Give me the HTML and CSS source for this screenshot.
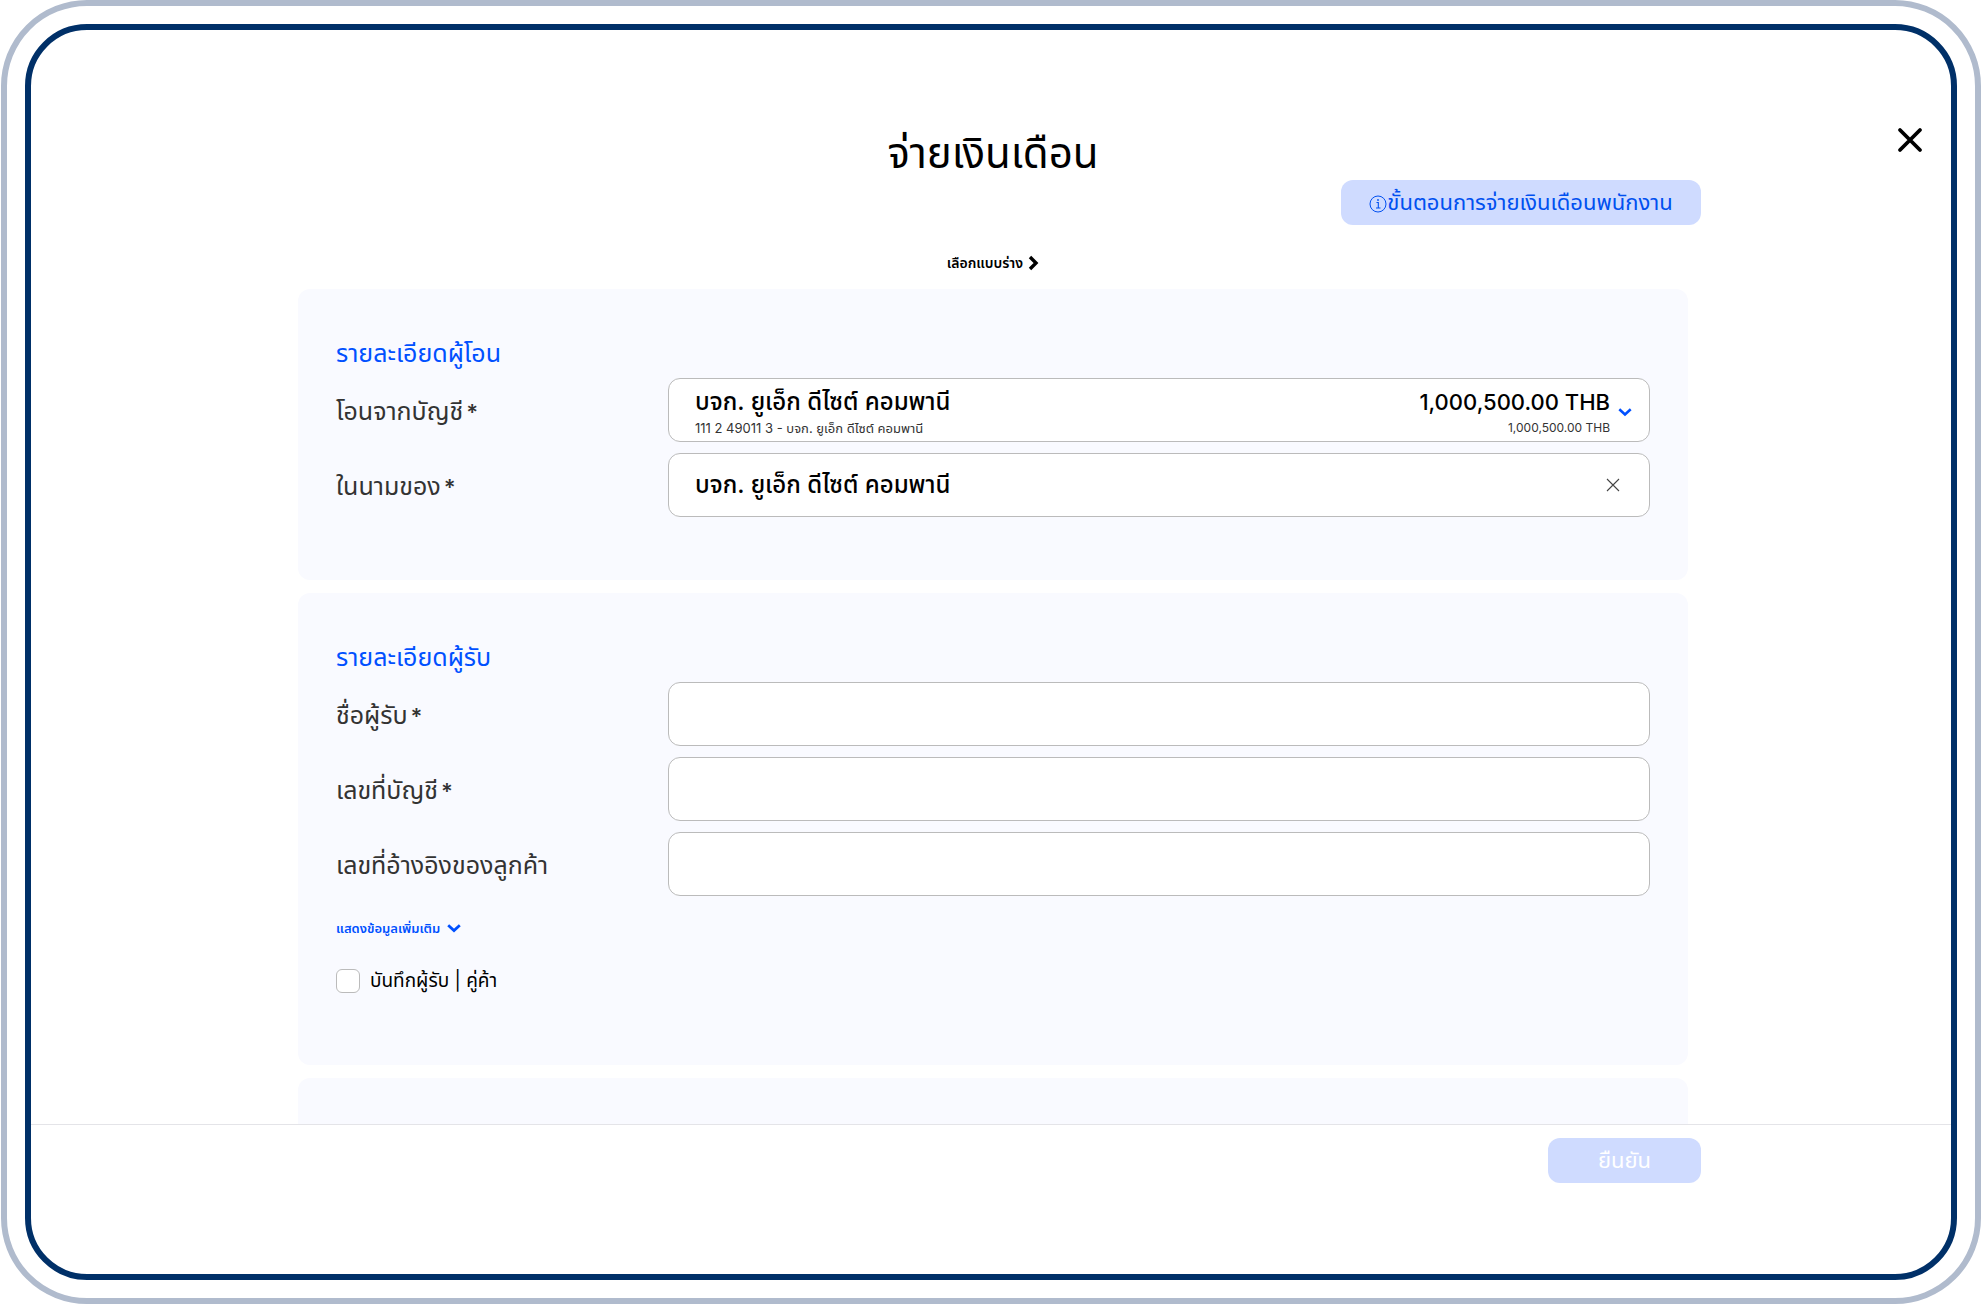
FILE: index.html
```html
<!DOCTYPE html>
<html lang="th">
<head>
<meta charset="utf-8">
<meta name="viewport" content="width=device-width, initial-scale=1">
<title>จ่ายเงินเดือน</title>
<link rel="stylesheet" href="styles.css">
</head>
<body>
<div class="frame">
  <div class="screen">
    <main class="content">
      <button class="close" type="button" aria-label="ปิด">
        <svg width="26" height="26" viewBox="0 0 26 26"><path d="M3 3L23 23M23 3L3 23" fill="none" stroke="#000" stroke-width="3.8" stroke-linecap="round"/></svg>
      </button>
      <header class="header">
        <h1 class="title">จ่ายเงินเดือน</h1>
        <a class="guide" href="#guide">
          <svg width="18" height="18" viewBox="0 0 18 18" fill="none" stroke="#0050f0"><circle cx="9" cy="9" r="8" stroke-width="1"/><path d="M7.5 7.5H9.3V13M7 13H11.5" stroke-width="1.1"/><circle cx="9" cy="5" r=".9" fill="#0050f0" stroke="none"/></svg>ขั้นตอนการจ่ายเงินเดือนพนักงาน
        </a>
        <button class="draft" type="button">เลือกแบบร่าง
          <svg width="11" height="16" viewBox="0 0 11 16"><path d="M2 2L8 8L2 14" fill="none" stroke="#000" stroke-width="3.4"/></svg>
        </button>
      </header>
      <form class="cards" id="payroll">
        <section class="card">
          <h2 class="heading">รายละเอียดผู้โอน</h2>
          <div class="rows">
            <div class="row">
              <label class="label" for="account">โอนจากบัญชี<span class="star">*</span></label>
              <button class="field account" id="account" type="button" aria-haspopup="listbox">
                <span class="lines">
                  <span class="line-main">บจก. ยูเอ็ก ดีไซต์ คอมพานี</span>
                  <span class="line-sub">111 2 49011 3 - บจก. ยูเอ็ก ดีไซต์ คอมพานี</span>
                </span>
                <span class="lines amounts">
                  <span class="line-main">1,000,500.00 THB</span>
                  <span class="line-sub">1,000,500.00 THB</span>
                </span>
                <svg class="chevron" width="14" height="9" viewBox="0 0 14 9"><path d="M1.3 1.3L7 6.4L12.7 1.3" fill="none" stroke="#0050ff" stroke-width="2.6"/></svg>
              </button>
            </div>
            <div class="row">
              <label class="label" for="behalf">ในนามของ<span class="star">*</span></label>
              <div class="field clearable">
                <input class="text" id="behalf" type="text" value="บจก. ยูเอ็ก ดีไซต์ คอมพานี">
                <button class="clear" type="button" aria-label="ล้าง">
                  <svg width="14" height="14" viewBox="0 0 14 14"><path d="M1 1L13 13M13 1L1 13" fill="none" stroke="#444" stroke-width="1.1"/></svg>
                </button>
              </div>
            </div>
          </div>
        </section>
        <section class="card">
          <h2 class="heading">รายละเอียดผู้รับ</h2>
          <div class="rows">
            <div class="row">
              <label class="label" for="payee">ชื่อผู้รับ<span class="star">*</span></label>
              <input class="field text" id="payee" type="text">
            </div>
            <div class="row">
              <label class="label" for="number">เลขที่บัญชี<span class="star">*</span></label>
              <input class="field text" id="number" type="text">
            </div>
            <div class="row">
              <label class="label" for="reference">เลขที่อ้างอิงของลูกค้า</label>
              <input class="field text" id="reference" type="text">
            </div>
          </div>
          <button class="more" type="button">แสดงข้อมูลเพิ่มเติม
            <svg width="14" height="9" viewBox="0 0 14 9"><path d="M1.2 1.3L7 6.6L12.8 1.3" fill="none" stroke="#0050ff" stroke-width="2.8"/></svg>
          </button>
          <label class="save"><input class="check" type="checkbox"><span>บันทึกผู้รับ | คู่ค้า</span></label>
        </section>
        <section class="card"></section>
      </form>
    </main>
    <footer class="footer">
      <div class="actions"><button class="confirm" type="submit" form="payroll" disabled>ยืนยัน</button></div>
    </footer>
  </div>
</div>
</body>
</html>
```
FILE: styles.css
```css
* { box-sizing: border-box; }

body {
  margin: 0;
  background: #fff;
  color: #000;
  font-family: Inter, "Noto Sans Thai", "Noto Sans", sans-serif;
}

button, input {
  margin: 0;
  padding: 0;
  border: 0;
  background: none;
  color: inherit;
  font: inherit;
}

svg { flex: none; display: block; }

.frame {
  height: 100vh;
  margin-left: 1px;
  padding: 18px;
  border: 6px solid #b0bbcd;
  border-radius: 86px;
  display: flex;
}

.screen {
  flex: 1;
  min-width: 0;
  border: 6px solid #003068;
  border-radius: 62px;
  overflow: hidden;
  display: flex;
  flex-direction: column;
}

.content {
  position: relative;
  flex: 1;
  min-height: 0;
  overflow: hidden;
  padding: 96px 0 0 4px;
}

.close {
  position: absolute;
  top: 97px;
  right: 28px;
}

.header, .actions {
  width: 100%;
  max-width: 1416px;
  margin: 0 auto;
}

.header {
  display: flex;
  flex-direction: column;
  align-items: center;
}

.title {
  margin: 0;
  font-size: 42px;
  line-height: 54px;
  font-weight: 400;
}

.guide {
  align-self: flex-end;
  height: 45px;
  width: 360px;
  padding-top: 2px;
  display: flex;
  align-items: center;
  justify-content: center;
  border-radius: 12px;
  background: #cfdbff;
  color: #0050f0;
  font-size: 22px;
  text-decoration: none;
  white-space: nowrap;
}

.draft, .more {
  display: flex;
  align-items: center;
  gap: 5px;
  line-height: 20px;
  font-weight: 600;
}

.draft { margin: 28px 0 16px; font-size: 14px; }

.cards {
  width: 100%;
  max-width: 1390px;
  margin: 0 auto;
  display: flex;
  flex-direction: column;
  gap: 13px;
}

.card {
  min-height: 291px;
  padding: 46px 38px 62px;
  border-radius: 12px;
  background: #f9faff;
}

.heading {
  margin: 0 0 7px;
  color: #0050ff;
  font-size: 25px;
  line-height: 36px;
  font-weight: 400;
}

.rows { display: grid; gap: 11px; }

.row {
  display: grid;
  grid-template-columns: 332px 1fr;
  align-items: center;
}

.label { padding-top: 2px; color: #333; font-size: 25px; line-height: 36px; }
.star { margin-left: 3px; font-size: 22px; font-weight: 600; }

.field {
  width: 100%;
  height: 64px;
  padding: 0 26px;
  border: 1px solid #bbb;
  border-radius: 12px;
  background: #fff;
}

.text { font-size: 24px; font-weight: 500; }

.account {
  display: flex;
  align-items: center;
  padding-right: 17px;
}

.lines { flex: 1; display: flex; flex-direction: column; padding-top: 3px; text-align: left; }
.line-main { font-size: 24px; line-height: 32px; font-weight: 500; }
.line-sub { color: #333; font-size: 13px; line-height: 20px; }
.amounts { text-align: right; }
.amounts .line-main { font-size: 22px; }
.amounts .line-sub { font-size: 12px; }
.chevron { margin: 4px 0 0 8px; }

.clearable { display: flex; align-items: center; padding-right: 29px; }
.clearable .text { flex: 1; padding-top: 2px; }

.more { margin-top: 22px; gap: 7px; color: #0050ff; font-size: 13px; }

.save {
  display: flex;
  align-items: center;
  gap: 10px;
  margin: 31px 0 10px;
  font-size: 19px;
  line-height: 24px;
}

.check {
  appearance: none;
  width: 24px;
  height: 24px;
  border: 1px solid #bbb;
  border-radius: 6px;
  background: #fff;
}

.footer {
  flex: none;
  height: 150px;
  padding: 13px 0 0 4px;
  border-top: 1px solid #e4e4e8;
}

.actions { display: flex; justify-content: flex-end; }

.confirm {
  width: 153px;
  height: 45px;
  padding-top: 2px;
  border-radius: 12px;
  background: #cfdbff;
  color: #fff;
  font-size: 22px;
}
```
